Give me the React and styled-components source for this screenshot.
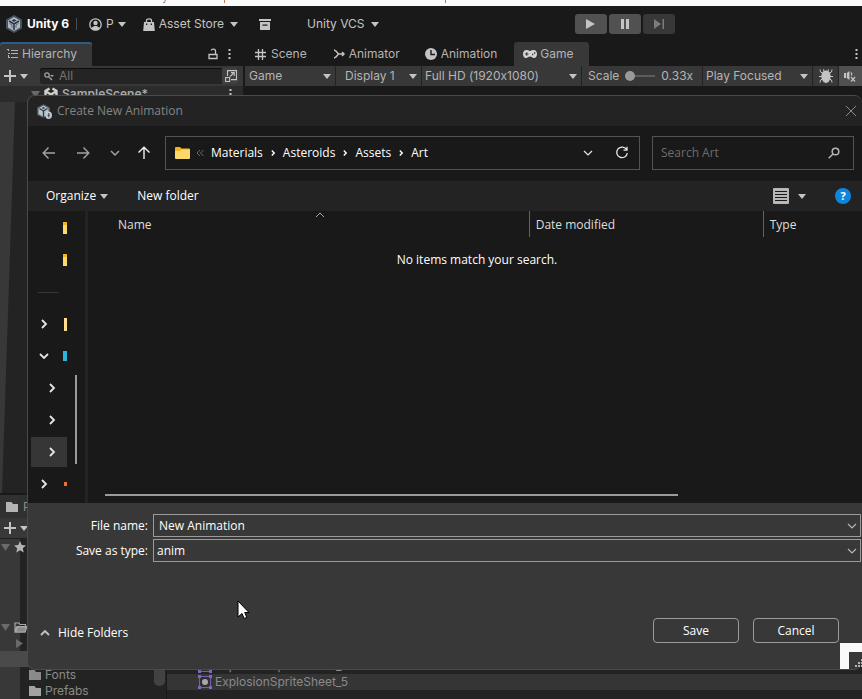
import React, { useState } from "react";
import styled, { createGlobalStyle, css } from "styled-components";

const GlobalStyle = createGlobalStyle`
  * { box-sizing: border-box; }
  body { margin: 0; background: #191919; }
  button, input, select { font: inherit; color: inherit; }
  button { background: none; border: 0; padding: 0; }
  svg { display: block; flex-shrink: 0; }
`;

const Editor = styled.div`
  position: relative;
  display: flex;
  flex-direction: column;
  min-height: 100vh;
  overflow: hidden;
  background: #191919;
  color: #c4c4c4;
  font: 12px/16px Inter, "Liberation Sans", sans-serif;
`;

const TopStrip = styled.div`
  height: 6px;
  background: #fafafa;
`;

const MainBar = styled.header`
  display: flex;
  align-items: center;
  height: 36px;
  padding-left: 6px;
  white-space: nowrap;
`;

const Brand = styled.strong`
  display: flex;
  align-items: center;
  gap: 5px;
  padding-right: 7px;
  color: #fff;
`;

const Rule = styled.span`
  width: 1px;
  height: 12px;
  background: #4a4a4a;
`;

const BarButton = styled.button`
  display: flex;
  align-items: center;
  gap: 4px;
  margin-left: ${(p) => p.$space || 0}px;

  ${(p) =>
    p.$menu &&
    css`
      > svg:last-child { margin-left: 2px; }
    `}
`;

const PlayGroup = styled.div`
  display: flex;
  gap: 2px;
  margin-left: 196px;
`;

const PlayButton = styled.button`
  display: grid;
  place-items: center;
  width: 32px;
  height: 20px;
  border-radius: 3px;
  background: ${(p) => (p.$dim ? "#383838" : "#515151")};
  color: ${(p) => (p.$dim ? "#7c7c7c" : "#c4c4c4")};
`;

const Workspace = styled.div`
  display: flex;
  flex: 1;
  gap: 2px;
`;

const HierarchyPane = styled.section`
  display: flex;
  flex-direction: column;
  width: 243px;
`;

const GamePane = styled.section`
  flex: 1;
  min-width: 0;
`;

const Tabs = styled.div`
  display: flex;
  align-items: stretch;
  height: 24px;
  white-space: nowrap;
`;

const Tab = styled.button`
  display: flex;
  align-items: center;
  gap: ${(p) => p.$gap || 4}px;
  padding: 0 ${(p) => p.$end || p.$pad || 13}px 0 ${(p) => p.$pad || 13}px;
  color: #b4b4b4;
  ${(p) =>
    p.$active &&
    css`
      background: #383838;
      border-radius: 3px 3px 0 0;
    `}
  ${(p) =>
    p.$focused &&
    css`
      box-shadow: inset 0 2px #2c5d87;
    `}
`;

const TabTools = styled.div`
  display: flex;
  align-items: center;
  gap: 10px;
  margin-left: auto;
  padding-right: ${(p) => p.$end}px;
`;

const Tools = styled.div`
  display: flex;
  align-items: center;
  height: 20px;
  background: #383838;
  white-space: nowrap;
`;

const AddButton = styled.button`
  display: flex;
  align-items: center;
  gap: 4px;
  padding: 0 12px 0 4px;
`;

const SearchField = styled.div`
  display: flex;
  flex: 1;
  align-items: center;
  gap: 5px;
  height: 16px;
  min-width: 0;
  margin-right: 4px;
  padding-left: 4px;
  overflow: hidden;
  border-radius: 3px;
  background: #242424;
  box-shadow: inset 0 1px #0d0d0d;

  input {
    flex: 1;
    min-width: 0;
    padding: 0;
    border: 0;
    background: none;
    outline: none;
  }
  input::placeholder { color: #747474; opacity: 1; }
  button {
    display: grid;
    place-items: center;
    width: 17px;
    height: 16px;
    background: #3f3f3f;
  }
`;

const SceneRow = styled.div`
  display: flex;
  align-items: center;
  gap: 4px;
  height: 16px;
  padding: 0 11px 0 31px;
  background: #2b2b2b;
  color: #a8a8a8;
  font-weight: 600;

  > :last-child { margin-left: auto; }
`;

const HierarchyBody = styled.div`
  flex: 1;
  background: #383838;

  &::before {
    content: "";
    display: block;
    height: 100%;
    background: #232323;
    clip-path: polygon(15px 0, 100% 0, 100% 100%, 2px 100%);
  }
`;

const Cell = styled.div`
  position: relative;
  display: flex;
  flex: ${(p) => (p.$grow ? "1 1" : "0 0")} ${(p) => p.$w}px;
  align-items: center;
  gap: 6px;
  height: 20px;
  padding-left: ${(p) => p.$pad || 0}px;
  border-right: 1px solid #232323;
  background: ${(p) => (p.$lit ? "#505050" : "#383838")};
  color: #b4b4b4;
  /* Inter swaps the x between digits for a multiply sign */
  font-feature-settings: "calt" 0;

  &:last-child { border-right: 0; }
  select {
    width: 100%;
    padding: 0;
    border: 0;
    background: none;
    appearance: none;
    outline: none;
    font-feature-settings: inherit;
  }
  select + svg {
    position: absolute;
    right: 4px;
    pointer-events: none;
  }
  > button {
    display: grid;
    flex: 1;
    place-items: center;
  }
`;

const ScaleSlider = styled.input`
  width: 30px;
  height: 12px;
  margin: 0;
  appearance: none;
  background: linear-gradient(#5e5e5e, #5e5e5e) center / 100% 2px no-repeat;

  &::-webkit-slider-thumb {
    appearance: none;
    width: 10px;
    height: 10px;
    border-radius: 50%;
    background: #999;
  }
`;

const Project = styled.section`
  border-top: 2px solid #191919;
  background: #232323;
  color: #8a8a8a;
`;

const ProjectHead = styled.div`
  display: flex;
  align-items: center;
  gap: 5px;
  height: 23px;
  padding-left: 6px;
  background: #303030;
`;

const ProjectTools = styled(Tools)`
  height: 21px;
  border-bottom: 1px solid #1f1f1f;
`;

const ProjectBody = styled.div`
  display: flex;
`;

const Tree = styled.div`
  display: flex;
  width: 167px;
  border-right: 1px solid #191919;
  background: linear-gradient(90deg, #383838 20px, #232323 20px);
`;

const TreeRows = styled.div`
  flex: 1;
`;

const TreeRow = styled.div`
  display: flex;
  align-items: center;
  gap: 4px;
  height: 16px;
  padding-left: ${(p) => p.$indent || 0}px;
  background: ${(p) => (p.$selected ? "#4a4a4a" : "none")};
`;

const TreeScroll = styled.div`
  align-self: flex-end;
  width: 11px;
  height: 60px;
  margin: 0 1px 13px;
  border-radius: 5px;
  background: #424242;
`;

const AssetList = styled.div`
  display: flex;
  flex: 1;
  flex-direction: column;
  justify-content: flex-end;
  padding-bottom: 9px;
`;

const AssetRow = styled.div`
  display: flex;
  align-items: center;
  gap: 3px;
  height: 16px;
  padding-left: 31px;
  background: ${(p) => (p.$shaded ? "#353535" : "none")};
`;

const Dialog = styled.div`
  position: absolute;
  inset: 95px 0 29px 27px;
  display: flex;
  flex-direction: column;
  overflow: hidden;
  border: 1px solid #4a4a4a;
  border-right: 0;
  border-radius: 8px;
  background: #383838;
  color: #fff;
  font: 12px/16px "Open Sans", "Noto Sans", sans-serif;
`;

const TitleBar = styled.div`
  display: flex;
  align-items: center;
  gap: 5px;
  height: 30px;
  padding: 0 5px 0 9px;
  background: #232323;
  color: #848484;

  h1 {
    flex: 1;
    margin: 0;
    font: inherit;
  }
`;

const NavRow = styled.div`
  display: flex;
  align-items: center;
  gap: 12px;
  height: 55px;
  padding: 0 8px 1px 14px;
  background: #191919;
`;

const NavButtons = styled.div`
  display: flex;
  align-items: center;
  gap: 20px;
  width: 111px;

  button:nth-child(3) { margin-right: -3px; }
`;

const Address = styled.nav`
  display: flex;
  flex: 1;
  align-items: center;
  height: 34px;
  padding: 0 10px 0 9px;
  border: 1px solid #535353;
  white-space: nowrap;
`;

const Crumbs = styled.div`
  display: flex;
  flex: 1;
  align-items: center;
  gap: 7px;
  margin-left: 6px;

  a { color: #fff; text-decoration: none; }
`;

const AddressTools = styled.div`
  display: flex;
  align-items: center;
  gap: 22px;
`;

const SearchBox = styled.label`
  display: flex;
  align-items: center;
  width: 202px;
  height: 34px;
  padding: 0 13px 0 8px;
  border: 1px solid #535353;

  input {
    flex: 1;
    min-width: 0;
    padding: 0;
    border: 0;
    background: none;
    outline: none;
  }
  input::placeholder { color: #6d6d6d; opacity: 1; }
`;

const CommandBar = styled.div`
  display: flex;
  align-items: center;
  height: 30px;
  padding: 0 11px 0 18px;
  background: #232323;
`;

const Command = styled.button`
  display: flex;
  align-items: center;
  gap: ${(p) => p.$gap || 4}px;
  margin-right: 29px;
`;

const Spacer = styled.div`
  flex: 1;
`;

const Help = styled.button`
  width: 16px;
  height: 16px;
  border-radius: 50%;
  background: #0f86dc;
  font-size: 11px;
  font-weight: 700;
`;

const Browser = styled.div`
  display: flex;
  flex: 1;
  background: #191919;
`;

const Sidebar = styled.div`
  position: relative;
  width: 60px;
  padding-top: 1px;
  border-right: 3px solid #232323;
`;

const SideItem = styled.div`
  display: flex;
  align-items: center;
  justify-content: space-between;
  width: 36px;
  height: 32px;
  margin-left: 3px;
  padding-left: ${(p) => (p.$deep ? 16 : 8)}px;

  ${(p) =>
    p.$selected &&
    css`
      background: #363636;
      box-shadow: inset 0 1px #191919, inset 0 -1px #191919;
    `}

  hr {
    width: 21px;
    margin: 0 0 0 -1px;
    border: 0;
    border-top: 1px solid #383838;
  }
`;

const Sliver = styled.i`
  width: ${(p) => p.$w || 4}px;
  height: ${(p) => p.$h || 12}px;
  margin-left: auto;
  background: ${(p) => p.$fill};
`;

const SideThumb = styled.div`
  position: absolute;
  top: 164px;
  right: 8px;
  width: 2px;
  height: 89px;
  background: #9b9b9b;
`;

const Files = styled.div`
  display: flex;
  flex: 1;
  flex-direction: column;
`;

const FileTable = styled.table`
  width: 100%;
  border-collapse: collapse;
  table-layout: fixed;

  th {
    height: 26px;
    padding: 2px 0 0 6px;
    border-right: 1px solid #636363;
    color: #dedede;
    font-weight: 400;
    text-align: left;
  }
  th:first-child { padding-left: 30px; }
  th:last-child { border: 0; }
  td {
    padding: 15px 0 0 4px;
    text-align: center;
  }
`;

const NameHead = styled.span`
  position: relative;
  display: block;

  svg {
    position: absolute;
    top: -7px;
    left: 48%;
  }
`;

const FilesThumb = styled.div`
  width: 74%;
  height: 2px;
  margin: auto 0 7px 17px;
  background: #9b9b9b;
`;

const Footer = styled.form`
  display: flex;
  flex-direction: column;
  height: 166px;
  padding: 11px 1px 26px 12px;
`;

const Field = styled.div`
  display: flex;
  align-items: center;
  gap: 5px;
  margin-bottom: 2px;

  label {
    width: 108px;
    text-align: right;
  }
`;

const Combo = styled.div`
  position: relative;
  display: flex;
  flex: 1;
  align-items: center;
  height: 23px;
  border: 1px solid #9b9b9b;

  input, select {
    width: 100%;
    padding: 0 20px 0 ${(p) => p.$pad}px;
    border: 0;
    background: none;
    appearance: none;
    outline: none;
  }
  svg {
    position: absolute;
    right: 3px;
    pointer-events: none;
  }
`;

const Actions = styled.div`
  display: flex;
  align-items: center;
  gap: 14px;
  margin-top: auto;
  padding-right: 22px;
`;

const HideFolders = styled.button`
  display: flex;
  align-items: center;
  gap: 8px;
  margin-right: auto;
  padding-top: 5px;
`;

const ActionButton = styled.button`
  width: 86px;
  height: 25px;
  border: 1px solid #9b9b9b;
  border-radius: 4px;
`;

const Grip = styled.div`
  position: absolute;
  right: 0;
  bottom: 30px;
  width: 22px;
  height: 26px;
  padding: 7px 0 0 6px;
  border: solid #fafafa;
  border-width: 9px 0 0 9px;
`;

const Pointer = styled.div`
  position: absolute;
  top: 600px;
  left: 237px;
`;

const Caret = ({ color = "#c4c4c4", w = 8 }) => (
  <svg width={w} height="5" viewBox="0 0 8 5" fill={color}>
    <path d="M0 0h8L4 5z" />
  </svg>
);

const Foldout = ({ right }) => (
  <svg width="9" height="9" viewBox="0 0 9 9" fill="#6a6a6a">
    <path d={right ? "M1 0l7 4.500-7 4.500z" : "M0 1h9L4.500 8z"} />
  </svg>
);

const Chevron = ({ dir = "down", size = 10, color = "#e6e6e6", weight = 1.4 }) => {
  const shapes = {
    down: "M1 3l4 4 4-4",
    up: "M1 7l4-4 4 4",
    right: "M3 1l4 4-4 4",
  };
  return (
    <svg width={size} height={size} viewBox="0 0 10 10" fill="none" stroke={color} strokeWidth={weight}>
      <path d={shapes[dir]} />
    </svg>
  );
};

const Arrow = ({ turn = 0, color = "#a2a2a2" }) => (
  <svg width="14" height="14" viewBox="0 0 14 14" fill="none" stroke={color} strokeWidth="1.400">
    <path d="M13 7H1.500M6.500 1.500L1.200 7l5.300 5.500" transform={`rotate(${turn} 7 7)`} />
  </svg>
);

const UnityBadge = () => (
  <svg width="16" height="18" viewBox="0 0 16 18">
    <path d="M8 0l8 4.500v9L8 18l-8-4.500v-9z" fill="#46525e" />
    <path d="M8 2l6 3.500v7L8 16l-6-3.500v-7z" fill="#aebbc6" />
    <path d="M8 9V15M8 9L3 6M8 9l5-3" stroke="#2e3740" strokeWidth="1.600" />
    <path d="M8 4l2.500 1.500L8 7 5.500 5.500z" fill="#2e3740" />
    <path d="M3.500 8.500l2.500 1.500v3M12.500 8.500L10 10v3" fill="none" stroke="#5b6874" />
  </svg>
);

const DialogBadge = () => (
  <svg width="15" height="15" viewBox="0 0 15 15">
    <path d="M6.500 0L13 3.500v7.500L6.500 14 0 11V3.500z" fill="#4a5660" />
    <path d="M6.500 1.500l5 2.800v6l-5 2.700-5-2.700v-6z" fill="#b4c2cc" />
    <path d="M6.500 7v6M6.500 7l-4-2.500M6.500 7l4-2.500" stroke="#2e3740" strokeWidth="1.300" />
    <path d="M6.500 3l1.800 1-1.800 1-1.800-1z" fill="#2e3740" />
    <path d="M11.500 7.500c2.300 0 3.500 1.500 3.500 3.700S13.800 15 11.500 15 8.500 13.400 8.500 11.200s.8-3.700 3-3.700z" fill="#c3ccd3" />
    <path d="M11.800 9v4.500M10.500 11.200h2.600" stroke="#414950" />
  </svg>
);

const UnityCube = () => (
  <svg width="14" height="14" viewBox="0 0 14 14" fill="none" stroke="#d0d0d0" strokeWidth="2.400">
    <path d="M5.500 1.500L1.500 4v5.500L7 13l5.500-3.500V4l-4-2.500M7 7.500V13M7 7.500L2 4.500M7 7.500l5-3" />
  </svg>
);

const Account = () => (
  <svg width="13" height="13" viewBox="0 0 13 13">
    <circle cx="6.500" cy="6.500" r="5.700" fill="none" stroke="#c4c4c4" strokeWidth="1.300" />
    <circle cx="6.500" cy="5" r="2.200" fill="#c4c4c4" />
    <path d="M2.500 10.500C3.500 8.300 5 8 6.500 8s3 .3 4 2.500A5.700 5.700 0 0 1 2.500 10.500z" fill="#c4c4c4" />
  </svg>
);

const Bag = () => (
  <svg width="12" height="13" viewBox="0 0 12 13">
    <path d="M1 4h10l.8 9H.2z" fill="#c4c4c4" />
    <path d="M3.500 5V2.500C3.500 .3 8.500 .3 8.500 2.500V5" fill="none" stroke="#c4c4c4" strokeWidth="1.300" />
    <path d="M3 5.500h1.300v1.500H3zM7.700 5.500H9v1.500H7.700z" fill="#191919" />
  </svg>
);

const Archive = () => (
  <svg width="12" height="11" viewBox="0 0 12 11">
    <path d="M0 0h12v2H0zM1 3h10v8H1z" fill="#c4c4c4" />
    <path d="M3.500 5.500h5v1.200h-5z" fill="#191919" />
  </svg>
);

const TreeIcon = () => (
  <svg width="11" height="10" viewBox="0 0 11 10" fill="#b4b4b4">
    <path d="M0 0h2v1H0zM4 1h7v1H4zM1 4h2v1H1zM4 4h7v1H4zM1 8h2v1H1zM4 8h7v1H4zM1 0h1v2H1zM1 6h1v2H1z" />
  </svg>
);

const Lock = () => (
  <svg width="10" height="12" viewBox="0 0 10 12" fill="none" stroke="#c4c4c4" strokeWidth="1.300">
    <path d="M1 6.500h8v4H1zM7.500 6V3c0-2.500-4-2.500-4.300-.5" />
  </svg>
);

const Kebab = () => (
  <svg width="3" height="11" viewBox="0 0 3 11" fill="#c4c4c4">
    <path d="M.5 0h2v2h-2zM.5 4h2v2h-2zM.5 8h2v2h-2z" />
  </svg>
);

const Plus = () => (
  <svg width="12" height="12" viewBox="0 0 12 12" stroke="#c4c4c4" strokeWidth="2">
    <path d="M6 0v12M0 6h12" />
  </svg>
);

const SmallSearch = () => (
  <svg width="10" height="9" viewBox="0 0 10 9">
    <circle cx="3" cy="3" r="2.200" fill="none" stroke="#a8a8a8" strokeWidth="1.200" />
    <path d="M4.600 4.600L8 8" stroke="#a8a8a8" strokeWidth="1.300" />
    <path d="M6 3h4L8 5z" fill="#a8a8a8" />
  </svg>
);

const PopOut = () => (
  <svg width="12" height="12" viewBox="0 0 12 12" fill="none" stroke="#c4c4c4" strokeWidth="1.100">
    <path d="M2.500 6V.6h9v9H6M.6 7.500h4v4h-4zM5 6.500L9 2.800M6 2.600h3.200V6" />
  </svg>
);

const Hash = () => (
  <svg width="11" height="11" viewBox="0 0 11 11" stroke="#c4c4c4" strokeWidth="1.300">
    <path d="M3.500 0v11M7.500 0v11M0 3.500h11M0 7.500h11" />
  </svg>
);

const Blend = () => (
  <svg width="11" height="10" viewBox="0 0 11 10" fill="none" stroke="#c4c4c4" strokeWidth="1.500">
    <path d="M0 1l2 1 2.500 3L2 8 0 9M4 5h6M8 3l2 2-2 2" />
  </svg>
);

const Clock = () => (
  <svg width="12" height="12" viewBox="0 0 12 12">
    <circle cx="6" cy="6" r="6" fill="#c4c4c4" />
    <path d="M6 2v4.500h4" fill="none" stroke="#191919" strokeWidth="1.400" />
  </svg>
);

const Gamepad = () => (
  <svg width="14" height="8" viewBox="0 0 14 8">
    <path d="M3.500 0C6 0 5.500 1 7 1s1-1 3.500-1C13 0 14 2 14 4s-1 4-3 4-2-1.500-4-1.500S5 8 3 8 0 6 0 4s1-4 3.500-4z" fill="#d4d4d4" />
    <path d="M2 4h3.500M3.750 2.200v3.600" stroke="#383838" strokeWidth="1.100" />
    <path d="M9 4.500h1.300M11 3h1.300" stroke="#383838" strokeWidth="1.300" />
  </svg>
);

const Bug = () => (
  <svg width="14" height="14" viewBox="0 0 14 14">
    <path d="M7 1.500c3.200 0 4.600 2.500 4.600 5.800S9.800 14 7 14s-4.600-3.400-4.600-6.700S3.800 1.500 7 1.500z" fill="#c4c4c4" />
    <path d="M3.500 4L1.500 3 1 .5M10.500 4l2-1L13 .5M3 7.500H0M11 7.500h3M3.500 10L1.500 11 1 13.500M10.500 10l2 1 .5 2.500M5 2.500L4.500 .3M9 2.500L9.500 .3" fill="none" stroke="#c4c4c4" />
  </svg>
);

const Mute = () => (
  <svg width="13" height="11" viewBox="0 0 13 11">
    <path d="M0 2h2v5H0zM2.800 2L5.500 0v9L2.800 7z" fill="#c4c4c4" />
    <path d="M7 6l4 4.500M11 6l-4 4.500M7 1.500c1 1 1 2 .5 3" stroke="#c4c4c4" strokeWidth="1.200" fill="none" />
  </svg>
);

const FolderIcon = ({ color = "#b4b4b4" }) => (
  <svg width="12" height="10" viewBox="0 0 12 10" fill={color}>
    <path d="M0 0h5.500L7 2h5v8H0z" />
  </svg>
);

const OpenFolder = () => (
  <svg width="13" height="11" viewBox="0 0 13 11" fill="none" stroke="#a8a8a8" strokeWidth="1.200">
    <path d="M1 10V1h4l1 1.500h5.500V4M1 10l2-5.500h9.500L11 10z" />
    <path d="M1.500 10l2-5h9l-1.500 5z" fill="#8a8a8a" />
  </svg>
);

const Star = () => (
  <svg width="12" height="12" viewBox="0 0 12 12" fill="#b4b4b4">
    <path d="M6 0l1.700 4 4.300.4-3.200 2.800.9 4.300L6 9.300 2.300 11.500l.9-4.300L0 4.400 4.300 4z" />
  </svg>
);

const SpriteIcon = () => (
  <svg width="14" height="14" viewBox="0 0 14 14">
    <path d="M1.500 1.500h11v11h-11z" fill="#303030" stroke="#7460a8" />
    <path d="M0 0h3v3H0zM11 0h3v3h-3zM0 11h3v3H0zM11 11h3v3h-3z" fill="#8068bc" />
    <circle cx="7" cy="7" r="3" fill="#a8a8a8" />
  </svg>
);

const YellowFolder = () => (
  <svg width="15" height="12" viewBox="0 0 15 12">
    <path d="M0 1Q0 0 1 0h4l1.500 1.500H14Q15 1.500 15 2.500V11H0z" fill="#f5b316" />
    <path d="M0 4h5l1.500-1.500H15V11Q15 12 14 12H1Q0 12 0 11z" fill="#ffd86c" />
  </svg>
);

const Refresh = () => (
  <svg width="14" height="14" viewBox="0 0 14 14" fill="none" stroke="#e6e6e6" strokeWidth="1.300">
    <path d="M11.500 3.500A5.300 5.300 0 1 0 12.300 7M12 .8v3.400H8.500" />
  </svg>
);

const Loupe = () => (
  <svg width="12" height="12" viewBox="0 0 12 12" fill="none" stroke="#b4b4b4" strokeWidth="1.500">
    <circle cx="7.500" cy="4.500" r="3.300" />
    <path d="M5 7L.7 11.300" />
  </svg>
);

const ListIcon = () => (
  <svg width="16" height="16" viewBox="0 0 16 16">
    <rect width="16" height="16" rx="1" fill="#b8b8b8" />
    <path d="M2 3.500h12M2 6.500h12M2 9.500h12M2 12.500h12" stroke="#191919" />
  </svg>
);

const Close = () => (
  <svg width="12" height="12" viewBox="0 0 12 12" stroke="#8a8a8a">
    <path d="M1 1l10 10M11 1L1 11" />
  </svg>
);

const crumbs = ["Materials", "Asteroids", "Assets", "Art"];

const sideItems = [
  { fill: "linear-gradient(#f5b316 3px, #ffd86c 3px)" },
  { fill: "linear-gradient(#f5b316 3px, #ffd86c 3px)" },
  { rule: true },
  { dir: "right", fill: "#ffdf8f", w: 3, h: 13 },
  { dir: "down", fill: "#29b6dc", h: 10 },
  { dir: "right", deep: true },
  { dir: "right", deep: true },
  { dir: "right", deep: true, selected: true },
  { dir: "right", fill: "#e8703a", w: 3, h: 4 },
];

const Picker = ({ label, value }) => (
  <>
    <select aria-label={label} defaultValue={value}>
      <option>{value}</option>
    </select>
    <Caret />
  </>
);

const SaveDialog = () => {
  const [fileName, setFileName] = useState("New Animation");

  return (
    <Dialog role="dialog" aria-labelledby="dialog-title">
      <TitleBar>
        <DialogBadge />
        <h1 id="dialog-title">Create New Animation</h1>
        <button aria-label="Close"><Close /></button>
      </TitleBar>
      <NavRow>
        <NavButtons>
          <button aria-label="Back"><Arrow /></button>
          <button aria-label="Forward"><Arrow turn={180} /></button>
          <button aria-label="Recent locations"><Chevron color="#a2a2a2" weight={1.5} /></button>
          <button aria-label="Up"><Arrow turn={90} color="#f0f0f0" /></button>
        </NavButtons>
        <Address aria-label="Location">
          <YellowFolder />
          <Crumbs>
            <svg width="8" height="8" viewBox="0 0 8 8" fill="none" stroke="#6a6a6a">
              <path d="M4 1L1 4l3 3M7.500 1l-3 3 3 3" />
            </svg>
            {crumbs.map((name, i) => (
              <React.Fragment key={name}>
                {i > 0 && <Chevron dir="right" size={6} color="#fff" weight={2.4} />}
                <a href="#">{name}</a>
              </React.Fragment>
            ))}
          </Crumbs>
          <AddressTools>
            <button aria-label="Previous locations"><Chevron weight={1.2} /></button>
            <button aria-label="Refresh"><Refresh /></button>
          </AddressTools>
        </Address>
        <SearchBox>
          <input type="text" aria-label="Search Art" placeholder="Search Art" />
          <Loupe />
        </SearchBox>
      </NavRow>
      <CommandBar>
        <Command>Organize <Caret /></Command>
        <Command>New folder</Command>
        <Spacer />
        <Command $gap={9} aria-label="Change view"><ListIcon /><Caret /></Command>
        <Help aria-label="Help">?</Help>
      </CommandBar>
      <Browser>
        <Sidebar>
          {sideItems.map((item, i) => (
            <SideItem key={i} $deep={item.deep} $selected={item.selected}>
              {item.rule && <hr />}
              {item.dir && <Chevron dir={item.dir} weight={1.8} />}
              {item.fill && <Sliver $fill={item.fill} $w={item.w} $h={item.h} />}
            </SideItem>
          ))}
          <SideThumb />
        </Sidebar>
        <Files>
          <FileTable>
            <colgroup>
              <col width="57%" />
              <col width="234" />
              <col />
            </colgroup>
            <thead>
              <tr>
                <th><NameHead>Name<Chevron dir="up" color="#a8a8a8" weight={1} /></NameHead></th>
                <th>Date modified</th>
                <th>Type</th>
              </tr>
            </thead>
            <tbody>
              <tr><td colSpan={3}>No items match your search.</td></tr>
            </tbody>
          </FileTable>
          <FilesThumb />
        </Files>
      </Browser>
      <Footer onSubmit={(e) => e.preventDefault()}>
        <Field>
          <label htmlFor="file-name">File name:</label>
          <Combo $pad={5}>
            <input id="file-name" type="text" value={fileName} onChange={(e) => setFileName(e.target.value)} />
            <Chevron color="#b4b4b4" weight={1.2} />
          </Combo>
        </Field>
        <Field>
          <label htmlFor="file-type">Save as type:</label>
          <Combo $pad={3}>
            <select id="file-type" defaultValue="anim">
              <option>anim</option>
            </select>
            <Chevron color="#b4b4b4" weight={1.2} />
          </Combo>
        </Field>
        <Actions>
          <HideFolders type="button"><Chevron dir="up" color="#c4c4c4" weight={1.8} />Hide Folders</HideFolders>
          <ActionButton type="submit">Save</ActionButton>
          <ActionButton type="button">Cancel</ActionButton>
        </Actions>
      </Footer>
    </Dialog>
  );
};

const App = () => {
  return (
    <>
      <GlobalStyle />
      <Editor>
        <TopStrip>
          <svg width="460" height="3" viewBox="0 0 460 3" fill="none">
            <path d="M163 2.500h1.500l1-2.500" stroke="#b06a8c" />
            <path d="M224.500 0v3" stroke="#c27a5a" />
            <path d="M445.500 0v3" stroke="#4aa0b8" />
          </svg>
        </TopStrip>
        <MainBar>
          <Brand><UnityBadge />Unity 6</Brand>
          <Rule />
          <BarButton $space={12}><Account />P<Caret /></BarButton>
          <BarButton $space={17} $menu><Bag />Asset Store<Caret /></BarButton>
          <BarButton $space={21} aria-label="Package manager"><Archive /></BarButton>
          <BarButton $space={36} $menu>Unity VCS<Caret /></BarButton>
          <PlayGroup>
            <PlayButton aria-label="Play">
              <svg width="9" height="10" viewBox="0 0 9 10" fill="currentColor"><path d="M0 0l9 5-9 5z" /></svg>
            </PlayButton>
            <PlayButton aria-label="Pause">
              <svg width="8" height="10" viewBox="0 0 8 10" fill="currentColor"><path d="M0 0h3v10H0zM5 0h3v10H5z" /></svg>
            </PlayButton>
            <PlayButton $dim aria-label="Step">
              <svg width="10" height="10" viewBox="0 0 10 10" fill="currentColor"><path d="M0 0l7 5-7 5zM8.500 0H10v10H8.500z" /></svg>
            </PlayButton>
          </PlayGroup>
        </MainBar>
        <Workspace>
          <HierarchyPane>
            <Tabs>
              <Tab $active $focused $pad={7} $end={15}><TreeIcon />Hierarchy</Tab>
              <TabTools $end={12}><Lock /><Kebab /></TabTools>
            </Tabs>
            <Tools>
              <AddButton aria-label="Add object"><Plus /><Caret /></AddButton>
              <SearchField>
                <SmallSearch />
                <input type="text" aria-label="Search hierarchy" placeholder="All" />
                <button aria-label="Open search"><PopOut /></button>
              </SearchField>
            </Tools>
            <SceneRow><Foldout /><UnityCube />SampleScene*<Kebab /></SceneRow>
            <HierarchyBody />
          </HierarchyPane>
          <GamePane>
            <Tabs>
              <Tab $pad={10} $gap={5}><Hash />Scene</Tab>
              <Tab $pad={17}><Blend />Animator</Tab>
              <Tab $pad={8} $end={17}><Clock />Animation</Tab>
              <Tab $active $pad={9} $end={15} $gap={3}><Gamepad />Game</Tab>
              <TabTools $end={4}><Kebab /></TabTools>
            </Tabs>
            <Tools>
              <Cell $w={91} $pad={4}><Picker label="View" value="Game" /></Cell>
              <Cell $w={86} $pad={9}><Picker label="Display" value="Display 1" /></Cell>
              <Cell $w={160} $pad={3} $grow><Picker label="Resolution" value="Full HD (1920x1080)" /></Cell>
              <Cell $w={121} $pad={6}>
                <label htmlFor="scale">Scale</label>
                <ScaleSlider id="scale" type="range" min="0" max="100" defaultValue="0" />
                0.33x
              </Cell>
              <Cell $w={110} $pad={3}><Picker label="Play mode" value="Play Focused" /></Cell>
              <Cell $w={26}><button aria-label="Debug"><Bug /></button></Cell>
              <Cell $w={23} $lit><button aria-label="Mute audio"><Mute /></button></Cell>
            </Tools>
          </GamePane>
        </Workspace>
        <Project>
          <ProjectHead><FolderIcon />P</ProjectHead>
          <ProjectTools>
            <AddButton aria-label="Add asset"><Plus /><Caret /></AddButton>
          </ProjectTools>
          <ProjectBody>
            <Tree>
              <TreeRows>
                <TreeRow $indent={1}><Foldout /><Star /></TreeRow>
                <TreeRow />
                <TreeRow />
                <TreeRow />
                <TreeRow />
                <TreeRow $indent={1}><Foldout /><OpenFolder /></TreeRow>
                <TreeRow $indent={15}><Foldout right /></TreeRow>
                <TreeRow $selected />
                <TreeRow $indent={29}><FolderIcon color="#8a8a8a" />Fonts</TreeRow>
                <TreeRow $indent={29}><FolderIcon color="#a2a2a2" />Prefabs</TreeRow>
              </TreeRows>
              <TreeScroll />
            </Tree>
            <AssetList>
              <AssetRow><SpriteIcon />ExplosionSpriteSheet_4</AssetRow>
              <AssetRow $shaded><SpriteIcon />ExplosionSpriteSheet_5</AssetRow>
            </AssetList>
          </ProjectBody>
        </Project>
        <SaveDialog />
        <Grip>
          <svg width="7" height="8" viewBox="0 0 7 8" fill="#b4b4b4">
            <path d="M0 6h2v2H0zM3 6h2v2H3zM3 3h2v2H3zM6 6h1v2H6zM6 3h1v2H6zM6 0h1v2H6z" />
          </svg>
        </Grip>
        <Pointer>
          <svg width="13" height="20" viewBox="0 0 13 20">
            <path d="M1 1v16l4-3.500 2.200 5 2.600-1.200L7.700 12.500H12z" fill="#fff" stroke="#000" />
          </svg>
        </Pointer>
      </Editor>
    </>
  );
};

export default App;
